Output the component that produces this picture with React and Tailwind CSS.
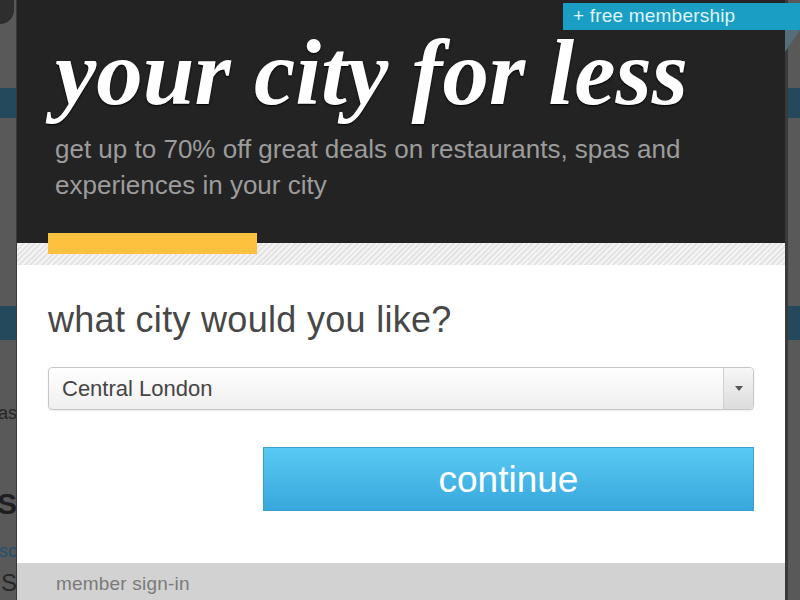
export default function App() {
  return (
    <div className="relative w-[800px] h-[600px] overflow-hidden bg-[#595959] font-['Liberation_Sans',Arial,sans-serif]">
      {/* page behind the overlay */}
      <div className="flex flex-col">
        <div className="h-[88px] px-0">
          <div className="w-[14px] h-[24px] rounded-br-full bg-[#2e2e2e]" />
        </div>
        <div className="h-[30px] bg-[#24485c]" />
        <div className="h-[188px]" />
        <div className="h-[34px] bg-[#24485c]" />
        <div className="h-[60px]" />
        <div className="w-[17px] overflow-hidden flex justify-end whitespace-nowrap text-[18px] text-[#262626]">pas</div>
        <div className="h-[62px]" />
        <div className="w-[17px] overflow-hidden flex justify-end whitespace-nowrap text-[30px] leading-[30px] font-bold text-[#1f1f1f]">S</div>
        <div className="h-[22px]" />
        <div className="w-[17px] overflow-hidden flex justify-end whitespace-nowrap text-[18px] leading-[20px] text-[#24506a]">asc</div>
        <div className="h-[10px]" />
        <div className="w-[17px] overflow-hidden flex justify-end whitespace-nowrap text-[24px] leading-[24px] text-[#262626]">S</div>
      </div>

      {/* modal */}
      <div className="absolute left-[17px] top-0 w-[768px] shadow-[3px_0_0_#3a3a3a,-1px_0_0_#3a3a3a]">
        <div className="h-[243px] bg-[#232323] pl-[38px] pt-[27px]">
          <h1 className="font-['Liberation_Serif',serif] italic font-bold text-[93px] leading-[92px] text-white [text-shadow:0_1px_2px_#000]">
            your city for less
          </h1>
          <p className="mt-[12px] text-[26px] leading-[36px] text-[#9c9c9c]">
            get up to 70% off great deals on restaurants, spas and
            <br />
            experiences in your city
          </p>
        </div>
        <div className="h-[22px] bg-[repeating-linear-gradient(135deg,#e4e4e4_0px,#e4e4e4_2px,#f4f4f4_2px,#f4f4f4_4px)]" />

        <div className="bg-white px-[31px] pt-[35px] pb-[52px]">
          <h2 className="text-[36px] leading-[40px] text-[#474747] tracking-[0.3px]">what city would you like?</h2>
          <div className="mt-[27px] h-[43px] flex rounded-[4px] border border-[#c6c6c6] bg-gradient-to-b from-white to-[#efefef] shadow-[0_1px_2px_rgba(0,0,0,0.08)]">
            <div className="flex-1 flex items-center pl-[13px] text-[22px] text-[#454545]">Central London</div>
            <div className="w-[30px] flex items-center justify-center border-l border-[#d0d0d0] rounded-r-[4px] bg-gradient-to-b from-[#f7f7f7] to-[#dcdcdc]">
              <div className="w-0 h-0 border-l-[4px] border-r-[4px] border-t-[5px] border-l-transparent border-r-transparent border-t-[#555]" />
            </div>
          </div>
          <div className="mt-[37px] flex justify-end">
            <button className="w-[491px] h-[64px] border border-[#3a9fd1] bg-gradient-to-b from-[#58c9f3] to-[#38a7dc] text-white text-[37px] leading-none">
              continue
            </button>
          </div>
        </div>

        <div className="h-[60px] bg-[#d2d2d2] pl-[39px] pt-[9px]">
          <span className="text-[19px] leading-[24px] text-[#7a7a7a] tracking-[0.2px]">member sign-in</span>
        </div>

        {/* yellow tab */}
        <div className="absolute left-[31px] top-[233px] w-[209px] h-[21px] bg-[#fcc23f]" />

        {/* ribbon */}
        <div className="absolute left-[546px] top-[3px] w-[254px] h-[27px] bg-[#1b9ec4] pl-[10px] flex items-center text-[19px] text-[#dff3fa] tracking-[0.2px]">
          + free membership
        </div>
        <svg className="absolute left-[768px] top-[30px]" width="15" height="22" viewBox="0 0 15 22">
          <polygon points="0,0 15,0 0,22" fill="#566e7a" />
        </svg>
      </div>
    </div>
  );
}
